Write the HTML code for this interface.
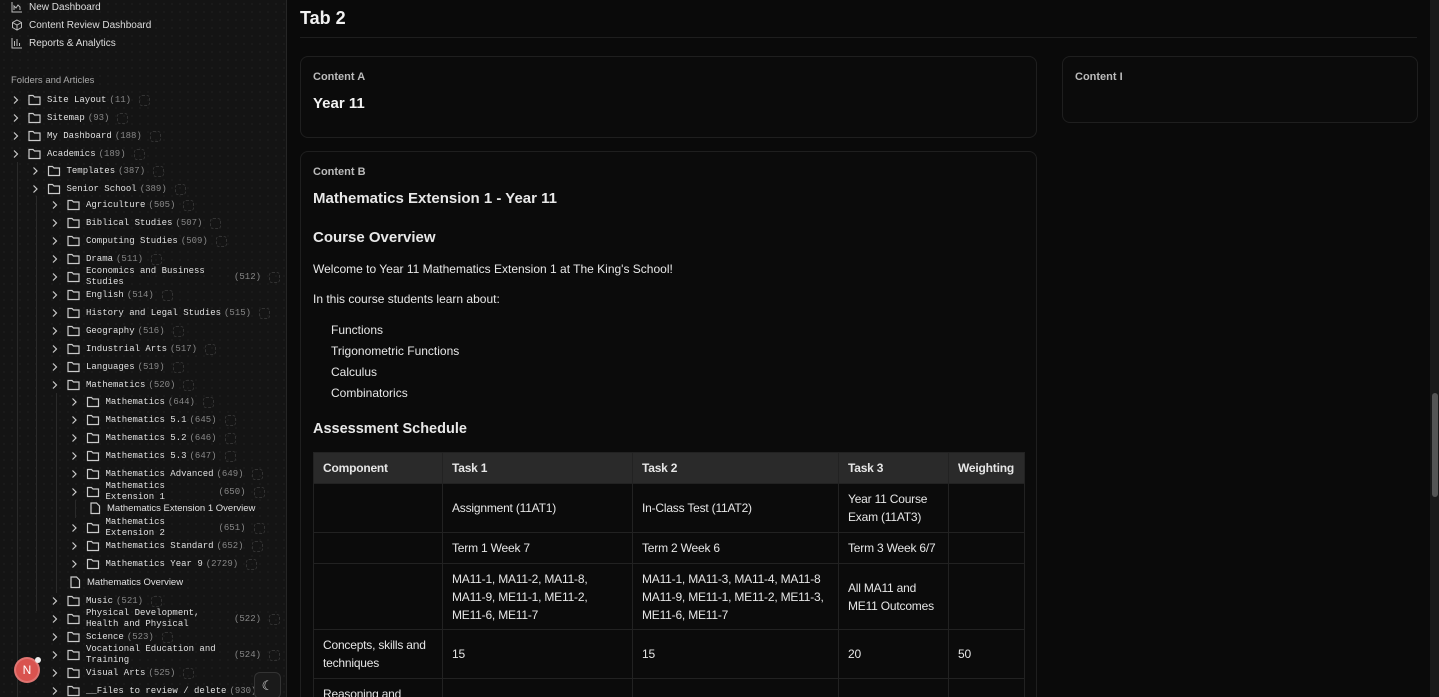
<!DOCTYPE html>
<html style="height:697px;overflow:hidden"><head><meta charset="utf-8"><style>
*{box-sizing:border-box;margin:0;padding:0}
body{width:1439px;height:697px;overflow:hidden;background:#0a0a0a;font-family:"Liberation Sans",sans-serif;color:#e8e8e8;position:relative}
#sb{position:absolute;left:0;top:0;width:287px;height:697px;background:#141414;border-right:1px solid #262626;background-image:radial-gradient(#1c1c1c 1px,transparent 1px);background-size:8px 8px}
.nav{position:absolute;left:11px;font-size:10px;color:#ddd;display:flex;align-items:center;gap:6px}
.nav svg{width:12px;height:12px}
.r{position:absolute;height:14px;display:flex;align-items:center;font-family:"Liberation Mono",monospace;font-size:9px;color:#e0e0e0;white-space:nowrap}
.r .c{color:#888;margin-left:3px}
.r .s{display:inline-block;width:11px;height:11px;border:1px dashed #333;border-radius:3px;margin-left:8px}
.vl{position:absolute;width:1px;background:#2a2a2a}
.two{line-height:11px;height:22px;overflow:hidden;display:block;width:140px;white-space:normal}
#main h1{position:absolute;left:300px;top:8px;font-size:18px;font-weight:bold;color:#f2f2f2}
.card{position:absolute;border:1px solid #1f1f1f;border-radius:8px;background:#0b0b0b;overflow:hidden}
.lbl{font-size:11px;font-weight:bold;color:#bbb;position:absolute;left:12px;top:14px}
table{border-collapse:collapse;position:absolute;left:12px;top:300px;width:712px;font-size:12px;color:#e6e6e6;letter-spacing:-0.2px}
td,th{border:1px solid #222;padding:0 9px;text-align:left;vertical-align:middle;line-height:18px}
th{background:#2a2a2a;height:31px;font-weight:bold}
</style></head><body>
<div id="sb">
<div class="nav" style="top:1px"><svg viewBox="0 0 12 12" fill="none" stroke="#bbb"><path d="M1 1v10h10M3 9V5l2 2 2-3 2 2v3"/></svg>New Dashboard</div>
<div class="nav" style="top:19px"><svg viewBox="0 0 12 12" fill="none" stroke="#bbb"><path d="M6 1l4.5 2.5v5L6 11 1.5 8.5v-5zM1.5 3.5L6 6l4.5-2.5M6 6v5"/></svg>Content Review Dashboard</div>
<div class="nav" style="top:37px"><svg viewBox="0 0 12 12" fill="none" stroke="#bbb"><path d="M1 1v10h10M3.5 9V4M6 9V2M8.5 9V6"/></svg>Reports &amp; Analytics</div>
<div style="position:absolute;left:11px;top:75px;font-size:9.5px;color:#aaa">Folders and Articles</div>
<div class="vl" style="left:17px;top:162px;height:535px"></div>
<div class="vl" style="left:36px;top:196px;height:415px"></div>
<div class="vl" style="left:56px;top:393px;height:200px"></div>
<div class="vl" style="left:75px;top:500px;height:18px"></div>
<svg width="287" height="697" style="position:absolute;left:0;top:0" fill="none" stroke="#ccc" stroke-width="1.2">
<g id="rows"></g>
</svg>
<div id="tree"></div>
<div style="position:absolute;left:14px;top:657px;width:26px;height:26px;border-radius:50%;background:#d9534f;border:2px solid #fff3;color:#fff;font-size:12px;display:flex;align-items:center;justify-content:center">N</div>
<div style="position:absolute;left:35px;top:657px;width:6px;height:6px;border-radius:50%;background:#eee"></div>
<div style="position:absolute;left:254px;top:672px;width:27px;height:27px;border:1px solid #333;border-radius:6px;background:#1a1a1a;display:flex;align-items:center;justify-content:center;color:#ddd;font-size:13px">☾</div>
</div>
<div id="main">
<h1>Tab 2</h1>
<div style="position:absolute;left:300px;top:37px;width:1117px;height:1px;background:#1e1e1e"></div>
<div class="card" style="left:300px;top:56px;width:737px;height:82px"><div class="lbl">Content A</div><div style="position:absolute;left:12px;top:38px;font-size:15px;font-weight:bold;color:#f2f2f2">Year 11</div></div>
<div class="card" style="left:1062px;top:56px;width:356px;height:67px"><div class="lbl">Content I</div></div>
<div class="card" style="left:300px;top:151px;width:737px;height:560px">
<div class="lbl">Content B</div>
<div style="position:absolute;left:12px;top:38px;font-size:15px;font-weight:bold">Mathematics Extension 1 - Year 11</div>
<div style="position:absolute;left:12px;top:77px;font-size:15px;font-weight:bold">Course Overview</div>
<div style="position:absolute;left:12px;top:110px;font-size:12px">Welcome to Year 11 Mathematics Extension 1 at The King's School!</div>
<div style="position:absolute;left:12px;top:140px;font-size:12px">In this course students learn about:</div>
<div style="position:absolute;left:30px;top:168px;font-size:12px;line-height:21px">Functions<br>Trigonometric Functions<br>Calculus<br>Combinatorics</div>
<div style="position:absolute;left:12px;top:269px;font-size:14.5px;font-weight:bold">Assessment Schedule</div>
<table>
<tr><th style="width:129px">Component</th><th style="width:190px">Task 1</th><th style="width:206px">Task 2</th><th style="width:110px">Task 3</th><th>Weighting</th></tr>
<tr style="height:49px"><td></td><td>Assignment (11AT1)</td><td>In-Class Test (11AT2)</td><td>Year 11 Course Exam (11AT3)</td><td></td></tr>
<tr style="height:31px"><td></td><td>Term 1 Week 7</td><td>Term 2 Week 6</td><td style="white-space:nowrap">Term 3 Week 6/7</td><td></td></tr>
<tr style="height:66px"><td></td><td>MA11-1, MA11-2, MA11-8, MA11-9, ME11-1, ME11-2, ME11-6, ME11-7</td><td>MA11-1, MA11-3, MA11-4, MA11-8 MA11-9, ME11-1, ME11-2, ME11-3, ME11-6, ME11-7</td><td>All MA11 and ME11 Outcomes</td><td></td></tr>
<tr style="height:49px"><td>Concepts, skills and techniques</td><td>15</td><td>15</td><td>20</td><td>50</td></tr>
<tr style="height:49px"><td>Reasoning and communication</td><td>15</td><td>15</td><td>20</td><td>50</td></tr>
</table>
</div>
<div style="position:absolute;left:1430px;top:0;width:9px;height:697px;background:#1a1a1a"></div>
<div style="position:absolute;left:1432px;top:393px;width:6px;height:104px;background:#555;border-radius:3px"></div>
</div>
<script>
var R=[[0,100,"Site Layout","11",1],[0,118,"Sitemap","93",1],[0,136,"My Dashboard","188",1],[0,154,"Academics","189",1],
[1,171,"Templates","387",1],[1,189,"Senior School","389",1],
[2,205,"Agriculture","505",1],[2,223,"Biblical Studies","507",1],[2,241,"Computing Studies","509",1],[2,259,"Drama","511",1],
[2,277,"Economics and Business Studies","512",2],[2,295,"English","514",1],[2,313,"History and Legal Studies","515",1],
[2,331,"Geography","516",1],[2,349,"Industrial Arts","517",1],[2,367,"Languages","519",1],[2,385,"Mathematics","520",1],
[3,402,"Mathematics","644",1],[3,420,"Mathematics 5.1","645",1],[3,438,"Mathematics 5.2","646",1],[3,456,"Mathematics 5.3","647",1],
[3,474,"Mathematics Advanced","649",1],[3,492,"Mathematics Extension 1","650",2],[4,508,"Mathematics Extension 1 Overview","",0],
[3,528,"Mathematics Extension 2","651",2],[3,546,"Mathematics Standard","652",1],[3,564,"Mathematics Year 9","2729",1],
[3.3,582,"Mathematics Overview","",0],
[2,601,"Music","521",1],[2,619,"Physical Development, Health and Physical Education","522",2],[2,637,"Science","523",1],
[2,655,"Vocational Education and Training","524",2],[2,673,"Visual Arts","525",1],[2,691,"__Files to review / delete","930",1]];
var g=document.getElementById('rows'),t=document.getElementById('tree'),sv="",h="";
R.forEach(function(r){var L=r[0],y=r[1],x=16+L*19.5;
if(r[4]){sv+='<path d="M'+(x-2)+' '+(y-3.5)+'l3.5 3.5-3.5 3.5"/>';
var fx=x+13;sv+='<path d="M'+fx+' '+(y-4.5)+'h4l1.5 1.5h5.5v7.5h-11z"/>';
var tx=x+31;
if(r[4]==2){var w=(L==3?110:145);h+='<div class="r" style="left:'+tx+'px;top:'+(y-11)+'px;height:22px"><span class="two" style="width:'+w+'px">'+r[2]+'</span><span class="c">('+r[3]+')</span><span class="s"></span></div>';}
else h+='<div class="r" style="left:'+tx+'px;top:'+(y-7)+'px"><span>'+r[2]+'</span><span class="c">('+r[3]+')</span><span class="s"></span></div>';}
else{var fx=(L==4?91:71);sv+='<path d="M'+fx+' '+(y-5)+'h5.5l3 3v7.5h-8.5z"/>';
h+='<div class="r" style="left:'+(fx+16)+'px;top:'+(y-7)+'px;font-family:Liberation Sans,sans-serif;font-size:9.5px">'+r[2]+'</div>';}
});
g.innerHTML=sv;t.innerHTML=h;
</script>
</body></html>
